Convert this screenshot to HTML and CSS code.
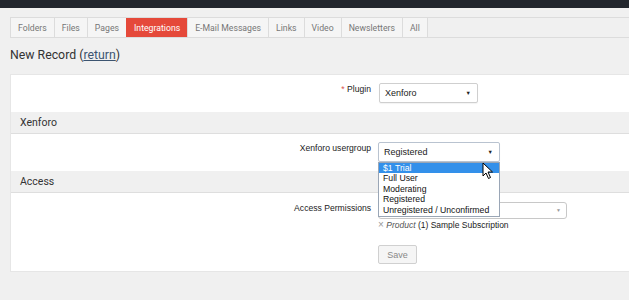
FILE: index.html
```html
<!DOCTYPE html>
<html>
<head>
<meta charset="utf-8">
<link rel="stylesheet" href="styles.css">
</head>
<body>
<div class="topbar"></div>
<div class="tabbar">
  <span class="tab">Folders</span>
  <span class="tab">Files</span>
  <span class="tab">Pages</span>
  <span class="tab active">Integrations</span>
  <span class="tab">E-Mail Messages</span>
  <span class="tab">Links</span>
  <span class="tab">Video</span>
  <span class="tab">Newsletters</span>
  <span class="tab">All</span>
</div>
<h1 class="title">New Record (<a class="link">return</a>)</h1>
<div class="card">
  <div class="row row-plugin">
    <div class="label"><span class="req">*</span> Plugin</div>
    <div class="control">
      <div class="select sel-plugin"><span>Xenforo</span><span class="arrow">▼</span></div>
    </div>
  </div>
  <div class="section">Xenforo</div>
  <div class="row row-group">
    <div class="label">Xenforo usergroup</div>
    <div class="control">
      <div class="select sel-group"><span>Registered</span><span class="arrow">▼</span></div>
      <ul class="dropdown">
        <li class="hl">$1 Trial</li>
        <li>Full User</li>
        <li>Moderating</li>
        <li>Registered</li>
        <li>Unregistered / Unconfirmed</li>
      </ul>
      <svg class="cursor" width="12" height="18" viewBox="0 0 12 18"><path d="M1 1 L1 14 L4 11 L6.5 16.5 L8.5 15.5 L6 10 L10.5 10 Z" fill="#fff" stroke="#000" stroke-width="1" stroke-linejoin="round"/></svg>
    </div>
  </div>
  <div class="section">Access</div>
  <div class="row row-access">
    <div class="label">Access Permissions</div>
    <div class="control">
      <div class="select2"><span class="arrow2">▼</span></div>
      <div class="chip"><span class="x">×</span> <em>Product</em> <span class="chip-name">(1) Sample Subscription</span></div>
      <button class="save">Save</button>
    </div>
  </div>
</div>
</body>
</html>
```

FILE: styles.css
```css
html, body {
  margin: 0;
  padding: 0;
}
body {
  background: #f0f0f0;
  font-family: Roboto, "Liberation Sans", Arial, sans-serif;
  color: #333;
  overflow: hidden;
  width: 629px;
  height: 300px;
}
.topbar {
  height: 8px;
  background: #22262d;
}
.tabbar {
  display: flex;
  margin: 9px 0 0 10px;
  height: 19px;
  border-top: 1px solid #dcdcdc;
  border-bottom: 1px solid #dcdcdc;
}
.tab {
  display: flex;
  align-items: center;
  padding: 0 7px;
  font-size: 8.7px;
  color: #777;
  background: #f5f5f5;
  border-left: 1px solid #dcdcdc;
}
.tab:nth-child(9) {
  border-right: 1px solid #dcdcdc;
}
.tab.active {
  background: #e5493a;
  color: #fff;
  border-left-color: #e5493a;
}
.title {
  margin: 0;
  padding: 8px 0 0 10px;
  height: 36px;
  box-sizing: border-box;
  font-size: 12.3px;
  font-weight: 400;
  color: #333;
  line-height: 18px;
}
.link {
  color: #3c5470;
  text-decoration: underline;
}
.card {
  margin: 0 0 0 10px;
  background: #fff;
  border: 1px solid #e6e6e6;
  border-right: none;
  height: 198px;
  box-sizing: border-box;
}
.row {
  display: grid;
  grid-template-columns: 360px 1fr;
  column-gap: 7px;
  font-family: "Liberation Sans", Arial, sans-serif;
}
.row-plugin {
  height: 37px;
  padding-top: 8px;
  box-sizing: border-box;
}
.row-group {
  height: 37px;
  padding-top: 8px;
  box-sizing: border-box;
}
.row-access {
  padding-top: 9px;
}
.label {
  text-align: right;
  font-size: 8.6px;
  color: #222;
  padding-top: 1px;
}
.req {
  color: #d9534f;
}
.control {
  position: relative;
}
.select {
  display: flex;
  align-items: center;
  justify-content: space-between;
  height: 20px;
  box-sizing: border-box;
  border: 1px solid #cfcfcf;
  border-radius: 2px;
  padding: 0 6px 0 5px;
  font-size: 9px;
  color: #222;
  background: #fff;
  box-shadow: 0 1px 1px rgba(0,0,0,0.05);
}
.sel-plugin {
  width: 99px;
  margin-left: 1px;
}
.sel-group {
  width: 122px;
  border-color: #b9c3d0;
}
.arrow {
  font-size: 5.5px;
  color: #222;
}
.section {
  height: 22px;
  box-sizing: border-box;
  background: #f0f0f0;
  border-bottom: 1px solid #dedede;
  padding: 4px 0 0 9px;
  font-size: 10.5px;
  color: #333;
}
.dropdown {
  position: absolute;
  left: 0;
  top: 20px;
  width: 122px;
  box-sizing: border-box;
  margin: 0;
  padding: 0 0 1px 0;
  list-style: none;
  background: #fff;
  border: 1px solid #9aa6b6;
  font-family: "Liberation Sans", Arial, sans-serif;
  font-size: 8.7px;
  color: #111;
  z-index: 5;
}
.dropdown li {
  height: 10.4px;
  line-height: 10.4px;
  padding-left: 4px;
}
.dropdown li.hl {
  background: #3390ea;
  color: #fff;
}
.cursor {
  position: absolute;
  left: 104px;
  top: 20px;
  z-index: 6;
}
.select2 {
  position: relative;
  width: 189px;
  height: 17px;
  box-sizing: border-box;
  border: 1px solid #c8c8c8;
  border-radius: 3px;
  background: #fff;
}
.arrow2 {
  position: absolute;
  right: 5px;
  top: 4px;
  font-size: 5px;
  color: #999;
}
.chip {
  font-size: 8.5px;
  margin-top: 0;
  color: #222;
  height: 12px;
  line-height: 12px;
}
.chip .x {
  color: #999;
  font-size: 10px;
}
.chip em {
  color: #555;
}
.chip-name {
  font-weight: 500;
  color: #222;
}
.save {
  display: block;
  margin-top: 14px;
  width: 39px;
  height: 19px;
  border: 1px solid #d0d0d0;
  border-radius: 2px;
  background: #f5f5f5;
  color: #888;
  font-family: "Liberation Sans", Arial, sans-serif;
  font-size: 9px;
  padding: 0;
}
```
